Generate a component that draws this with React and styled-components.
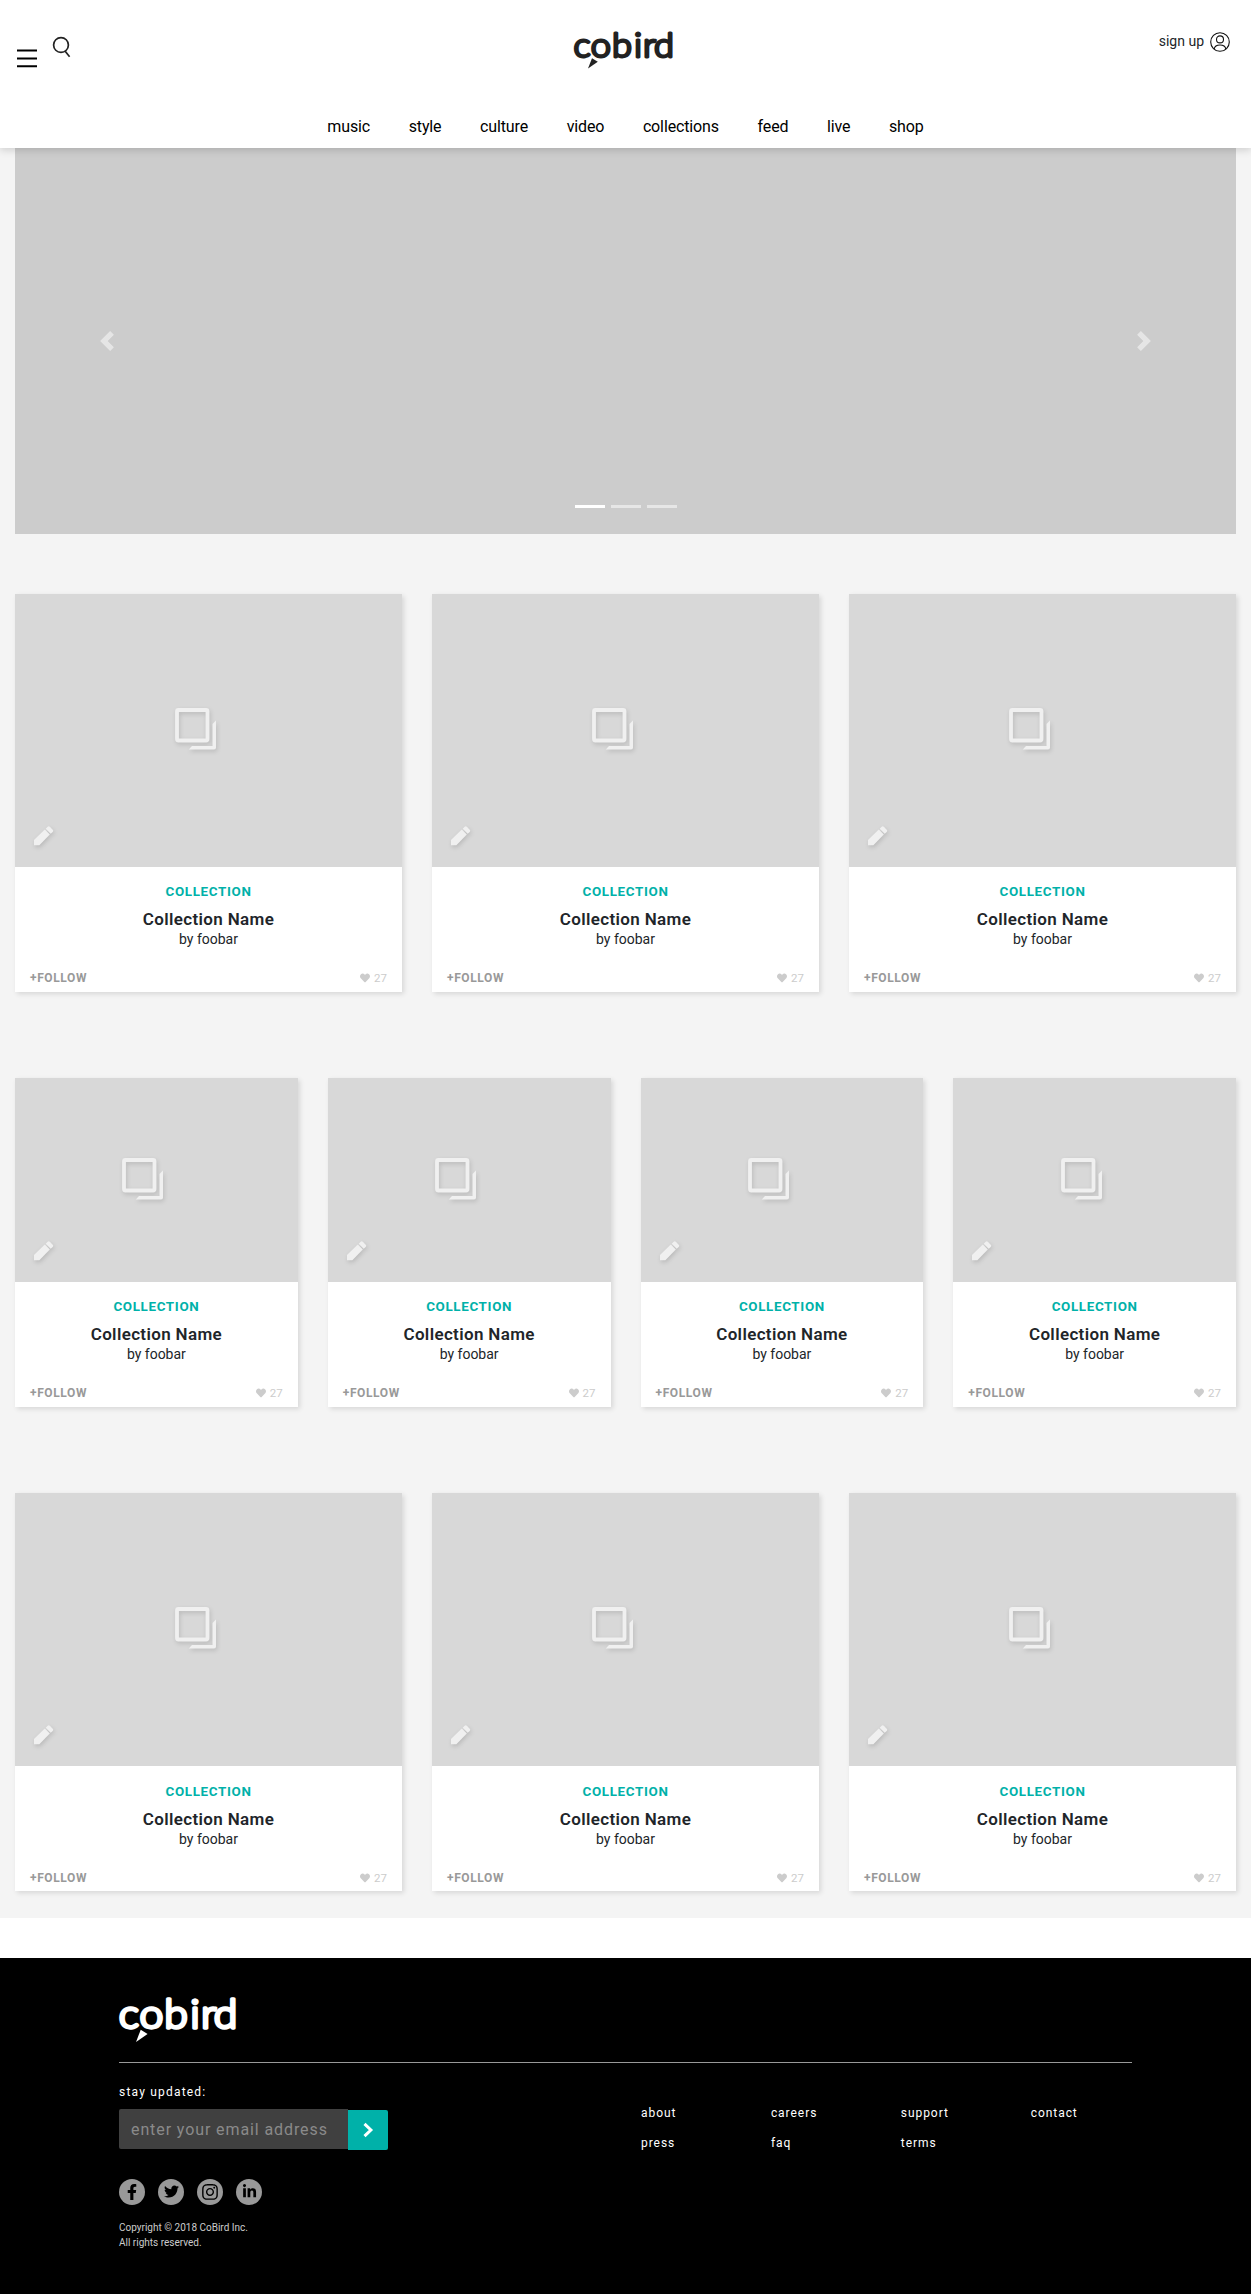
import React from 'react';
import styled, { createGlobalStyle } from 'styled-components';
import { FaFacebookF, FaTwitter, FaInstagram, FaLinkedinIn, FaHeart } from 'react-icons/fa';

const teal = '#00b1a9';

const GlobalStyle = createGlobalStyle`
  *, *::before, *::after { box-sizing: border-box; }
  body {
    margin: 0;
    background: #fff;
    color: #212529;
    font-family: Roboto, "Liberation Sans", sans-serif;
    font-size: 16px;
    line-height: 1.5;
  }
  a { color: inherit; text-decoration: none; }
  button { border: 0; padding: 0; background: none; font: inherit; cursor: pointer; }
  svg { display: block; }
`;

const Header = styled.header`
  position: relative;
  z-index: 2;
  height: 148px;
  background: #fff;
  box-shadow: 0 2px 8px rgba(0, 0, 0, 0.16);
  display: flex;
  flex-direction: column;
  justify-content: space-between;
`;

const TopBar = styled.div`
  display: grid;
  grid-template-columns: 1fr auto 1fr;
  align-items: start;
  padding: 22px 21px 0 17px;
`;

const Tools = styled.div`
  display: flex;
  align-items: flex-start;
  gap: 15px;
  padding-top: 14px;
`;

const MenuButton = styled.button`
  padding-top: 12px;
`;

const SignUp = styled.a`
  display: flex;
  justify-content: flex-end;
  align-items: center;
  gap: 6px;
  padding-top: 9px;
  font-size: 14px;
  line-height: 21px;
`;

const Nav = styled.nav`
  display: flex;
  justify-content: center;
  gap: 38.6px;
  padding-bottom: 9px;
  color: #000;
  letter-spacing: -0.13px;
`;

const Main = styled.main`
  background: #f4f4f4;
  padding: 0 15px 26.6px;
`;

const Hero = styled.section`
  height: 386px;
  margin-bottom: 60px;
  background: #ccc;
  display: grid;
  grid-template-columns: 15% 1fr 15%;
`;

const Arrow = styled.button`
  display: flex;
  align-items: center;
  justify-content: center;
  opacity: 0.5;
`;

const Indicators = styled.div`
  display: flex;
  justify-content: center;
  align-items: flex-end;
  gap: 6px;
  padding-bottom: 26px;
`;

const Indicator = styled.span`
  width: 30px;
  height: 3px;
  background: ${(p) => (p.$active ? '#fff' : 'rgba(255, 255, 255, 0.5)')};
`;

const CardRow = styled.section`
  display: grid;
  grid-template-columns: repeat(${(p) => p.$columns}, 1fr);
  gap: 30px;
  margin-top: ${(p) => p.$gapAbove}px;
`;

const Card = styled.article`
  background: #fff;
  box-shadow: 2px 2px 5px rgba(0, 0, 0, 0.12);
`;

const Cover = styled.div`
  position: relative;
  height: ${(p) => p.$height}px;
  background: #d8d8d8;
  display: flex;
  align-items: center;
  justify-content: center;
  padding: 0 26px 2px 0;
  svg { filter: drop-shadow(1px 2px 2px rgba(0, 0, 0, 0.14)); }
`;

const EditButton = styled.button`
  position: absolute;
  left: 19px;
  bottom: 21px;
`;

const CardBody = styled.div`
  height: 125px;
  padding: 16.2px 15px 4.8px;
  display: flex;
  flex-direction: column;
  align-items: center;
`;

const Kind = styled.div`
  color: ${teal};
  font-size: 13.4px;
  font-weight: 700;
  line-height: 18px;
  letter-spacing: 0.65px;
`;

const Title = styled.h2`
  margin: 6px 0 0;
  font-size: 17px;
  font-weight: 600;
  line-height: 24px;
  letter-spacing: 0.35px;
`;

const Author = styled.div`
  font-size: 14px;
  line-height: 16px;
`;

const CardFooter = styled.div`
  align-self: stretch;
  margin-top: auto;
  display: flex;
  justify-content: space-between;
  align-items: center;
  line-height: 18px;
`;

const Follow = styled.a`
  color: #999;
  font-size: 12px;
  font-weight: 700;
  letter-spacing: 0.6px;
`;

const Likes = styled.span`
  display: flex;
  align-items: center;
  gap: 4px;
  color: #ccc;
  font-size: 11.5px;
  font-weight: 400;
`;

const Footer = styled.footer`
  height: 336px;
  margin-top: 40px;
  padding: 29px 119px 0;
  background: #000;
  color: #fff;
`;

const FooterTop = styled.div`
  height: 76px;
  border-bottom: 1px solid #999;
  svg { margin-left: -2.4px; }
`;

const FooterGrid = styled.div`
  display: grid;
  grid-template-columns: 522px 1fr;
`;

const StayLabel = styled.label`
  display: block;
  margin-top: 20px;
  font-size: 12px;
  line-height: 18px;
  letter-spacing: 1.2px;
`;

const Form = styled.form`
  display: flex;
  margin-top: 8px;
`;

const EmailInput = styled.input`
  width: 229px;
  height: 40px;
  padding: 2px 12px 0;
  border: 0;
  border-radius: 2px 0 0 2px;
  background: #404040;
  color: #fff;
  font: 16px Roboto, sans-serif;
  letter-spacing: 0.9px;
  &::placeholder { color: #8a8a8a; opacity: 1; }
`;

const Submit = styled.button`
  width: 40px;
  height: 40px;
  margin-top: 1px;
  border-radius: 0 2px 2px 0;
  background: ${teal};
  display: flex;
  align-items: center;
  justify-content: center;
`;

const Socials = styled.div`
  display: flex;
  gap: 13px;
  margin-top: 29px;
`;

const Social = styled.a`
  width: 26px;
  height: 26px;
  border-radius: 50%;
  background: #999;
  color: #000;
  display: flex;
  align-items: center;
  justify-content: center;
`;

const Copyright = styled.p`
  margin: 15px 0 0;
  color: #ccc;
  font-size: 10px;
  line-height: 15px;
`;

const Links = styled.nav`
  display: grid;
  grid-template-columns: repeat(4, 129.9px);
  grid-template-rows: 30px 30px;
  padding-top: 41px;
  font-size: 12px;
  line-height: 18px;
  letter-spacing: 0.95px;
`;

const Logo = ({ width, height, color }) => (
  <svg width={width} height={height} viewBox="-2 -8 104 50" overflow="visible" role="img" aria-label="cobird">
    <text
      transform="scale(1.08 1)"
      x="-0.5 15.6 35.2 55.5 64 74"
      y="27"
      fontFamily="Lato, sans-serif"
      fontSize="33.5"
      fontWeight="300"
      fill={color}
      stroke={color}
      strokeWidth="2.8"
      strokeLinejoin="round"
    >
      cobird
    </text>
    <path d="M18 28.2L23.8 31.8L14 38.6Z" fill={color} />
  </svg>
);

const MenuIcon = () => (
  <svg width="20" height="20" viewBox="0 0 20 20">
    <path d="M0 2.5h20M0 10.4h20M0 18.3h20" stroke="#000" strokeWidth="2" />
  </svg>
);

const SearchIcon = () => (
  <svg width="19" height="22" viewBox="0 0 19 22" fill="none" stroke="#222" strokeWidth="1.7">
    <circle cx="9" cy="9" r="7.4" />
    <path d="M13 15l4.6 5.8" />
  </svg>
);

const UserIcon = () => (
  <svg width="20" height="20" viewBox="0 0 20 20" fill="none" stroke="#111" strokeWidth="1.1">
    <circle cx="10" cy="10" r="9.3" />
    <circle cx="10" cy="7.4" r="3.5" />
    <path d="M4.2 17c.4-2.7 2.8-4 5.8-4s5.4 1.3 5.8 4" />
  </svg>
);

const StackIcon = () => (
  <svg width="42" height="43" viewBox="0 0 42 43">
    <rect x="2" y="2" width="30.5" height="30.5" rx="1.5" fill="none" stroke="#f0f0f0" strokeWidth="3.8" />
    <path d="M41 12.5V39.5a2 2 0 0 1-2 2H13.8l3.2-3.4H37.5V16z" fill="#f0f0f0" />
  </svg>
);

const PencilIcon = () => (
  <svg width="20" height="20" viewBox="0 0 20 20" fill="#f0f0f0">
    <path d="M0 14L10.8 3.600l5 4.900L5.300 19.300H.6a.6.6 0 0 1-.6-.6z" />
    <path d="M11.7 2.800L13.700 .8a1.500 1.500 0 0 1 2.100 0l2.900 3a1.500 1.500 0 0 1 0 2.100l-2 1.900z" />
  </svg>
);

const ChevronIcon = () => (
  <svg width="12" height="16" viewBox="0 0 12 16" fill="none" stroke="#fff" strokeWidth="3">
    <path d="M2.5 1.8L8.9 8l-6.4 6.2" />
  </svg>
);

const CollectionCard = ({ coverHeight }) => (
  <Card>
    <Cover $height={coverHeight}>
      <StackIcon />
      <EditButton aria-label="edit"><PencilIcon /></EditButton>
    </Cover>
    <CardBody>
      <Kind>COLLECTION</Kind>
      <Title>Collection Name</Title>
      <Author>by foobar</Author>
      <CardFooter>
        <Follow href="#">+FOLLOW</Follow>
        <Likes><FaHeart size={10} />27</Likes>
      </CardFooter>
    </CardBody>
  </Card>
);

const rows = [
  { columns: 3, coverHeight: 273, gapAbove: 0 },
  { columns: 4, coverHeight: 204, gapAbove: 86 },
  { columns: 3, coverHeight: 273, gapAbove: 86.4 },
];

const navItems = ['music', 'style', 'culture', 'video', 'collections', 'feed', 'live', 'shop'];
const footerLinks = ['about', 'careers', 'support', 'contact', 'press', 'faq', 'terms'];
const socials = [
  { label: 'facebook', Icon: FaFacebookF, size: 16 },
  { label: 'twitter', Icon: FaTwitter, size: 15 },
  { label: 'instagram', Icon: FaInstagram, size: 18 },
  { label: 'linkedin', Icon: FaLinkedinIn, size: 15 },
];

export default function App() {
  return (
    <>
      <GlobalStyle />
      <Header>
        <TopBar>
          <Tools>
            <MenuButton aria-label="menu"><MenuIcon /></MenuButton>
            <button aria-label="search"><SearchIcon /></button>
          </Tools>
          <Logo width={104} height={50} color="#222" />
          <SignUp href="#">sign up<UserIcon /></SignUp>
        </TopBar>
        <Nav>
          {navItems.map((item) => <a href="#" key={item}>{item}</a>)}
        </Nav>
      </Header>
      <Main>
        <Hero>
          <Arrow aria-label="previous">
            <svg width="20" height="20" viewBox="0 0 8 8" fill="#fff">
              <path d="M5.25 0l-4 4 4 4 1.5-1.5-2.5-2.5 2.5-2.5-1.5-1.5z" />
            </svg>
          </Arrow>
          <Indicators>
            <Indicator $active />
            <Indicator />
            <Indicator />
          </Indicators>
          <Arrow aria-label="next">
            <svg width="20" height="20" viewBox="0 0 8 8" fill="#fff">
              <path d="M2.75 0l-1.5 1.5 2.5 2.5-2.5 2.5 1.5 1.5 4-4-4-4z" />
            </svg>
          </Arrow>
        </Hero>
        {rows.map((row, i) => (
          <CardRow $columns={row.columns} $gapAbove={row.gapAbove} key={i}>
            {Array.from({ length: row.columns }, (_, n) => (
              <CollectionCard coverHeight={row.coverHeight} key={n} />
            ))}
          </CardRow>
        ))}
      </Main>
      <Footer>
        <FooterTop><Logo width={123} height={59} color="#fff" /></FooterTop>
        <FooterGrid>
          <div>
            <StayLabel htmlFor="email">stay updated:</StayLabel>
            <Form>
              <EmailInput id="email" placeholder="enter your email address" />
              <Submit type="button" aria-label="subscribe"><ChevronIcon /></Submit>
            </Form>
            <Socials>
              {socials.map(({ label, Icon, size }) => (
                <Social href="#" aria-label={label} key={label}><Icon size={size} /></Social>
              ))}
            </Socials>
            <Copyright>Copyright © 2018 CoBird Inc.<br />All rights reserved.</Copyright>
          </div>
          <Links>
            {footerLinks.map((item) => <a href="#" key={item}>{item}</a>)}
          </Links>
        </FooterGrid>
      </Footer>
    </>
  );
}
